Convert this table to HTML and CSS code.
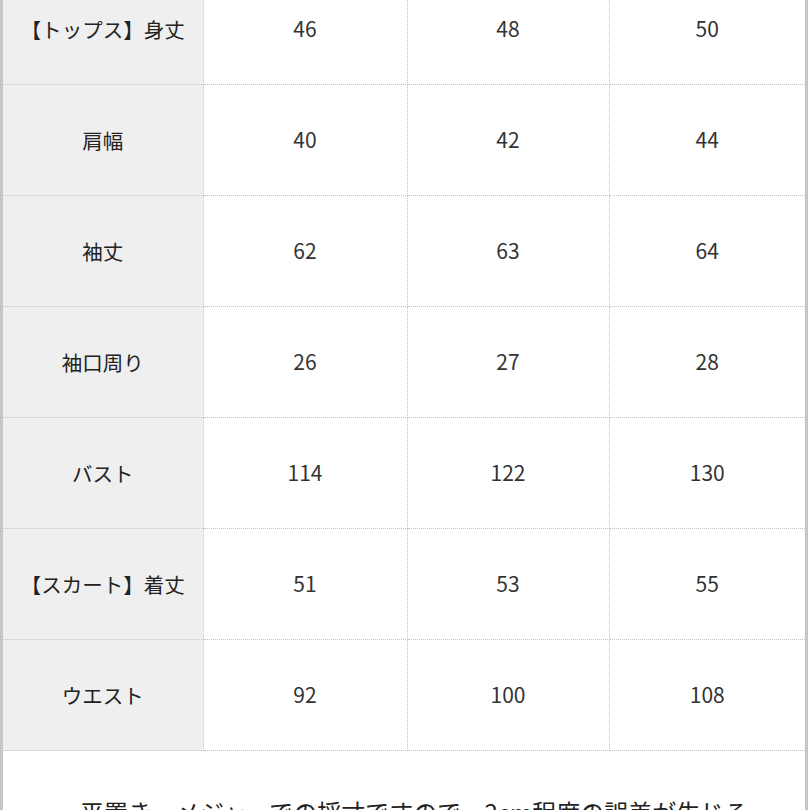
FILE: index.html
```html
<!DOCTYPE html>
<html lang="ja">
<head>
<meta charset="utf-8">
<title>サイズ表</title>
<link rel="stylesheet" href="styles.css">
</head>
<body>
<div class="sheet">
  <table class="size-table">
    <colgroup>
      <col class="c-label">
      <col class="c-a">
      <col class="c-b">
      <col class="c-c">
    </colgroup>
    <tbody>
      <tr><th>【トップス】身丈</th><td>46</td><td>48</td><td>50</td></tr>
      <tr><th>肩幅</th><td>40</td><td>42</td><td>44</td></tr>
      <tr><th>袖丈</th><td>62</td><td>63</td><td>64</td></tr>
      <tr><th>袖口周り</th><td>26</td><td>27</td><td>28</td></tr>
      <tr><th>バスト</th><td>114</td><td>122</td><td>130</td></tr>
      <tr><th>【スカート】着丈</th><td>51</td><td>53</td><td>55</td></tr>
      <tr><th>ウエスト</th><td>92</td><td>100</td><td>108</td></tr>
    </tbody>
  </table>
  <p class="note">平置き・メジャーでの採寸ですので、2cm程度の誤差が生じる場合がございます。</p>
</div>
</body>
</html>
```

FILE: styles.css
```css
html, body {
  margin: 0;
  padding: 0;
  background: #ffffff;
  height: 810px;
  overflow: hidden;
}

body {
  font-family: "Noto Sans CJK JP", "Noto Sans", sans-serif;
  color: #333333;
}

.sheet {
  width: 802px;
  margin-top: -26px;
  border-left: 3px solid #c6c6c6;
  border-right: 3px solid #c6c6c6;
  background: #ffffff;
  min-height: 900px;
}

.size-table {
  width: 802px;
  border-collapse: collapse;
  table-layout: fixed;
}

.c-label { width: 200px; }
.c-a { width: 204px; }
.c-b { width: 202px; }
.c-c { width: 196px; }

.size-table th,
.size-table td {
  height: 110px;
  padding: 0;
  text-align: center;
  vertical-align: middle;
  border: 1px dotted #c2c2c2;
  font-size: 21px;
  font-weight: 400;
  line-height: 1.2;
}

.size-table tr:first-child th,
.size-table tr:first-child td {
  border-top: none;
}

.size-table th {
  background: #efefef;
  border-left: none;
  color: #222222;
  font-size: 20.5px;
}

.size-table td:last-child {
  border-right: none;
}

.note {
  margin: 0;
  padding: 43px 45px 0 77px;
  text-align: left;
  font-size: 24px;
  line-height: 36px;
  color: #222222;
}
```
